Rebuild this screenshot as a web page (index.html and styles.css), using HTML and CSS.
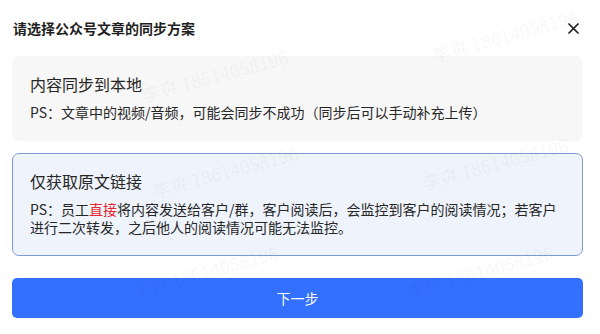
FILE: index.html
```html
<!DOCTYPE html>
<html lang="zh-CN">
<head>
  <meta charset="UTF-8" />
  <meta name="viewport" content="width=device-width, initial-scale=1.0"/>
  <title>同步方案</title>
  <link rel="stylesheet" href="styles.css">
</head>
<body>

  <div class="dialog">
    <div class="dialog-header">
      <h1>请选择公众号文章的同步方案</h1>
      <span class="close">
        <svg width="11" height="11" viewBox="0 0 11 11"><path d="M1 1L10 10M10 1L1 10" stroke="#1f1f1f" stroke-width="1.7" stroke-linecap="round"/></svg>
      </span>
    </div>

    <div class="option">
      <h2>内容同步到本地</h2>
      <p>PS：文章中的视频/音频，可能会同步不成功（同步后可以手动补充上传）</p>
    </div>

    <div class="option selected">
      <h2>仅获取原文链接</h2>
      <p>PS：员工<span class="highlight">直接</span>将内容发送给客户/群，客户阅读后，会监控到客户的阅读情况；若客户进行二次转发，之后他人的阅读情况可能无法监控。</p>
    </div>

    <button class="next-button">下一步</button>
  </div>

  <!-- watermark -->
  <div class="watermark">
    <span style="left: 430px; top: 22px;">李爽 18614058196</span>
    <span style="left: 140px; top: 62px;">李爽 18614058196</span>
    <span style="left: 150px; top: 158px;">李爽 18614058196</span>
    <span style="left: 420px; top: 150px;">李爽 18614058196</span>
    <span style="left: 130px; top: 258px;">李爽 18614058196</span>
    <span style="left: 405px; top: 258px;">李爽 18614058196</span>
  </div>

</body>
</html>
```

FILE: styles.css
```css
body {
  margin: 0;
  background-color: #fff;
  font-family: "Noto Sans CJK SC", "Liberation Sans", sans-serif;
  color: #1f1f1f;
  position: relative;
  overflow: hidden;
  height: 334px;
}

.dialog {
  padding: 0 17px 0 12px;
  display: flex;
  flex-direction: column;
}

.dialog-header {
  height: 56px;
  display: flex;
  align-items: center;
  justify-content: space-between;
  padding-left: 1px;
}

.dialog-header h1 {
  margin: 0;
  font-size: 14px;
  font-weight: bold;
  line-height: 20px;
  color: #1f1f1f;
}

.close {
  display: flex;
  margin-right: 4px;
  cursor: pointer;
}

.option {
  background-color: #f7f7f7;
  border: 1px solid transparent;
  border-radius: 7px;
  padding: 17px 17px 19px;
  margin-bottom: 12px;
}

.option.selected {
  background-color: #eef3fc;
  border-color: #7d9bd0;
}

.option h2 {
  margin: 0;
  font-size: 16px;
  font-weight: normal;
  line-height: 20px;
  color: #262626;
}

.option p {
  margin: 9px 0 0;
  font-size: 14px;
  line-height: 18px;
  color: #262626;
}

.highlight {
  color: #e8242c;
}

.next-button {
  margin-top: 10px;
  height: 40px;
  border: none;
  border-radius: 5px;
  background-color: #3370ff;
  color: #fff;
  font-family: inherit;
  font-size: 14px;
  cursor: pointer;
}

/* Watermark */
.watermark {
  position: absolute;
  inset: 0;
  pointer-events: none;
}

.watermark span {
  position: absolute;
  white-space: nowrap;
  font-size: 18px;
  color: rgba(0, 0, 0, 0.045);
  transform: rotate(-15deg);
}
```
